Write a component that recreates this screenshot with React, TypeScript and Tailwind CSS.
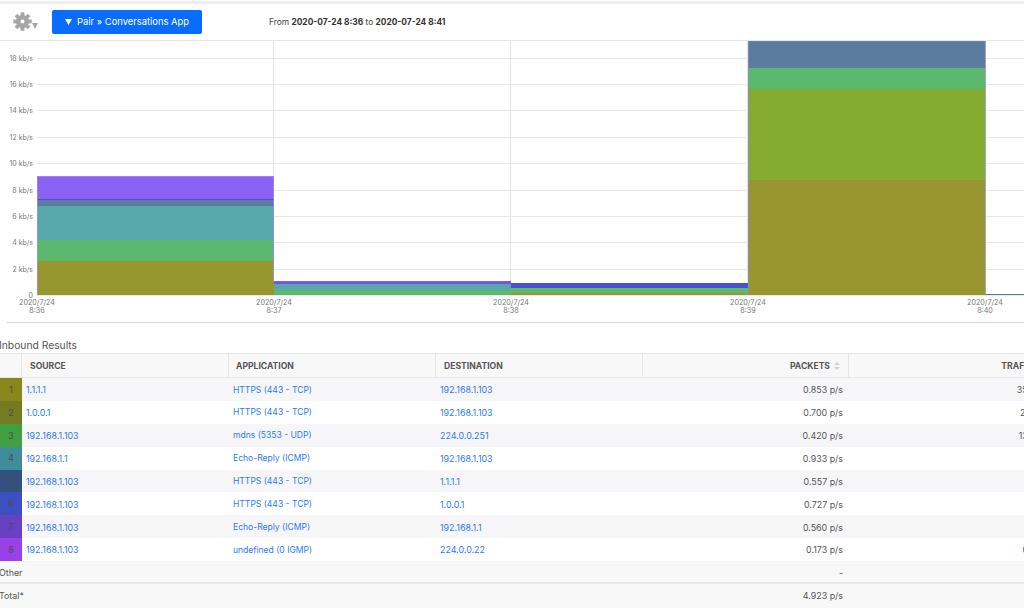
import React from "react";

const rows = [
  ["1", "bg-[#87871b]", "1.1.1.1", "HTTPS (443 - TCP)", "192.168.1.103", "0.853 p/s", "358 b/s"],
  ["2", "bg-[#767a20]", "1.0.0.1", "HTTPS (443 - TCP)", "192.168.1.103", "0.700 p/s", "2.6 b/s"],
  ["3", "bg-[#40a040]", "192.168.1.103", "mdns (5353 - UDP)", "224.0.0.251", "0.420 p/s", "135 b/s"],
  ["4", "bg-[#3f8c9a]", "192.168.1.1", "Echo-Reply (ICMP)", "192.168.1.103", "0.933 p/s", "8 b/s"],
  ["5", "bg-[#34507f]", "192.168.1.103", "HTTPS (443 - TCP)", "1.1.1.1", "0.557 p/s", "6 b/s"],
  ["6", "bg-[#3c50c4]", "192.168.1.103", "HTTPS (443 - TCP)", "1.0.0.1", "0.727 p/s", "5 b/s"],
  ["7", "bg-[#6a40c2]", "192.168.1.103", "Echo-Reply (ICMP)", "192.168.1.1", "0.560 p/s", "4 b/s"],
  ["8", "bg-[#9a40e8]", "192.168.1.103", "undefined (0 IGMP)", "224.0.0.22", "0.173 p/s", "0.1 b/s"],
];

const yTicks: [string, number][] = [
  ["18 kb/s", 58], ["16 kb/s", 84], ["14 kb/s", 110], ["12 kb/s", 137], ["10 kb/s", 163],
  ["8 kb/s", 190], ["6 kb/s", 216], ["4 kb/s", 242], ["2 kb/s", 269], ["0", 295],
];
const xTicks: [string, number][] = [["8:36", 37], ["8:37", 274], ["8:38", 511], ["8:39", 748], ["8:40", 985]];

const O = "#97962f", G = "#5ab96f", T = "#58a7ab", S = "#5b7b9f", B = "#4a50d0", P = "#8a63f5", L = "#85ab31";
const bars: [number, number, number, number, string][] = [
  [37, 261, 237, 34, O], [37, 240, 237, 21, G], [37, 206, 237, 34, T], [37, 200, 237, 6, S], [37, 199, 237, 1, B], [37, 176, 237, 23, P],
  [274, 290, 237, 5, G], [274, 284, 237, 6, T], [274, 281, 237, 3, "#6f55e0"],
  [511, 293, 237, 2, O], [511, 288, 237, 5, G], [511, 283, 237, 5, B],
  [748, 180, 237, 115, O], [748, 89, 237, 91, L], [748, 68, 237, 21, G], [748, 41, 237, 27, S],
  [985, 294, 39, 1, "#5b7b9f"],
];

const grid = "grid grid-cols-[22px_207px_207px_207px_206px_206px] w-[1055px]";

function Gear() {
  const teeth = [0, 45, 90, 135];
  return (
    <svg className="absolute left-[13px] top-[8px]" width="19" height="19" viewBox="0 0 19 19" fill="#a6a6a6">
      {teeth.map((a) => (
        <rect key={a} x="7.6" y="0.3" width="3.8" height="18.4" transform={`rotate(${a} 9.5 9.5)`} />
      ))}
      <circle cx="9.5" cy="9.5" r="6.6" />
      <circle cx="9.5" cy="9.5" r="1.9" fill="#fff" />
    </svg>
  );
}

function Row({ r, i }: { r: string[]; i: number }) {
  return (
    <div className={`${grid} h-[22.875px] items-center ${i % 2 === 0 ? "bg-[#f6f6f8]" : "bg-white"}`}>
      <div className={`${r[1]} h-full flex items-center justify-center text-[#4d4d4d]`}>{r[0]}</div>
      <a className="pl-1 pt-px text-[#2a7bf8]">{r[2]}</a>
      <a className="pl-1 pt-px text-[#2a7bf8] text-[8.55px]">{r[3]}</a>
      <a className="pl-1 pt-px text-[#2a7bf8]">{r[4]}</a>
      <div className="pr-[6px] pt-px text-right">{r[5]}</div>
      <div className="pr-[6px] pt-px text-right">{r[6]}</div>
    </div>
  );
}

export default function App() {
  return (
    <div className="w-[1024px] h-[613px] overflow-hidden bg-white font-['Inter',sans-serif] text-[#555]">
      <div className="h-[3px] mt-px bg-[#efefef]" />
      <div className="h-[37px] flex items-center border-b border-[#e6e6e6]">
        <div className="relative w-[52px] h-full shrink-0">
          <Gear />
          <div className="absolute left-[32px] top-[19px] w-0 h-0 border-x-[3.5px] border-x-transparent border-t-[6px] border-t-[#a6a6a6]" />
        </div>
        <button className="w-[150px] h-6 bg-[#0a6cff] rounded-[2px] text-white text-[9.4px] pl-[13px] flex items-center gap-[5px] whitespace-nowrap">
          <svg width="7" height="6" viewBox="0 0 7 6" fill="#fff"><path d="M0 0h7L3.5 6z" /></svg>
          Pair » Conversations App
        </button>
        <div className="ml-[67px] text-[8.4px] text-[#444] whitespace-nowrap">
          From <b className="text-[#333]">2020-07-24 8:36</b> to <b className="text-[#333]">2020-07-24 8:41</b>
        </div>
      </div>

      <svg viewBox="0 41 1024 283" className="block w-[1024px] h-[283px]" fontFamily="Inter, sans-serif">
        {yTicks.map(([t, y]) => (
          <g key={t}>
            <line x1={37} x2={1024} y1={y + 0.5} y2={y + 0.5} stroke="#e8e8e8" />
            <text x={33} y={y + 2.5} textAnchor="end" fontSize={7} fill="#777">{t}</text>
          </g>
        ))}
        {xTicks.slice(1).map(([, x]) => (
          <line key={x} x1={x - 0.5} x2={x - 0.5} y1={41} y2={295} stroke="#e4e4e4" />
        ))}
        {bars.map(([x, y, w, h, c], i) => (
          <rect key={i} x={x} y={y} width={w} height={h} fill={c} />
        ))}
        <path d="M37.5 295V176.5H273.5V281" fill="none" stroke="#a78bfa" strokeOpacity={0.7} />
        <path d="M273.5 281.5H510.5V284" fill="none" stroke="#8a63f5" strokeOpacity={0.7} />
        <path d="M748.5 295V41H985.5V295" fill="none" stroke="#8c8cc0" strokeOpacity={0.8} />
        {xTicks.map(([t, x]) => (
          <text key={t} textAnchor="middle" fontSize={7.2} fill="#777">
            <tspan x={x} y={304.5}>2020/7/24</tspan>
            <tspan x={x} y={312.5}>{t}</tspan>
          </text>
        ))}
        <line x1={7} x2={1024} y1={322.5} y2={322.5} stroke="#e0e0e0" strokeWidth={1.5} />
      </svg>

      <div className="h-[29px] pt-[14px] -ml-px text-[10.3px] leading-[14px] text-[#555] whitespace-nowrap">Inbound Results</div>

      <div className="text-[8.9px] overflow-hidden whitespace-nowrap">
        <div className={`${grid} h-[25px] items-center bg-[#f8f8f8] border-y border-[#e6e6e6] font-bold text-[#555] text-[8.6px]`}>
          <div className="h-full border-r border-[#e6e6e6]" />
          <div className="h-full flex items-center pl-2 pt-px border-r border-[#e6e6e6]">SOURCE</div>
          <div className="h-full flex items-center pl-[7px] pt-px border-r border-[#e6e6e6]">APPLICATION</div>
          <div className="h-full flex items-center pl-2 pt-px border-r border-[#e6e6e6]">DESTINATION</div>
          <div className="h-full flex items-center justify-end pr-2 pt-px gap-1 border-r border-[#e6e6e6]">
            PACKETS
            <svg width="6" height="8" viewBox="0 0 6 8" fill="#d0d0d0"><path d="M3 0l3 3H0zM3 8L0 5h6z" /></svg>
          </div>
          <div className="h-full flex items-center justify-end pr-[17px] pt-px">TRAFFIC</div>
        </div>
        {rows.map((r, i) => <Row key={r[0]} r={r} i={i} />)}
        <div className={`${grid} h-[23px] items-center bg-[#f8f8f8] border-b-2 border-[#e8e8e8]`}>
          <div className="col-span-4 -ml-px pt-0.5">Other</div>
          <div className="pr-[6px] pt-0.5 text-right">-</div>
          <div />
        </div>
        <div className={`${grid} h-[24px] items-center bg-[#f8f8f8]`}>
          <div className="col-span-4 -ml-px">Total*</div>
          <div className="pr-[6px] text-right">4.923 p/s</div>
          <div />
        </div>
      </div>
    </div>
  );
}
